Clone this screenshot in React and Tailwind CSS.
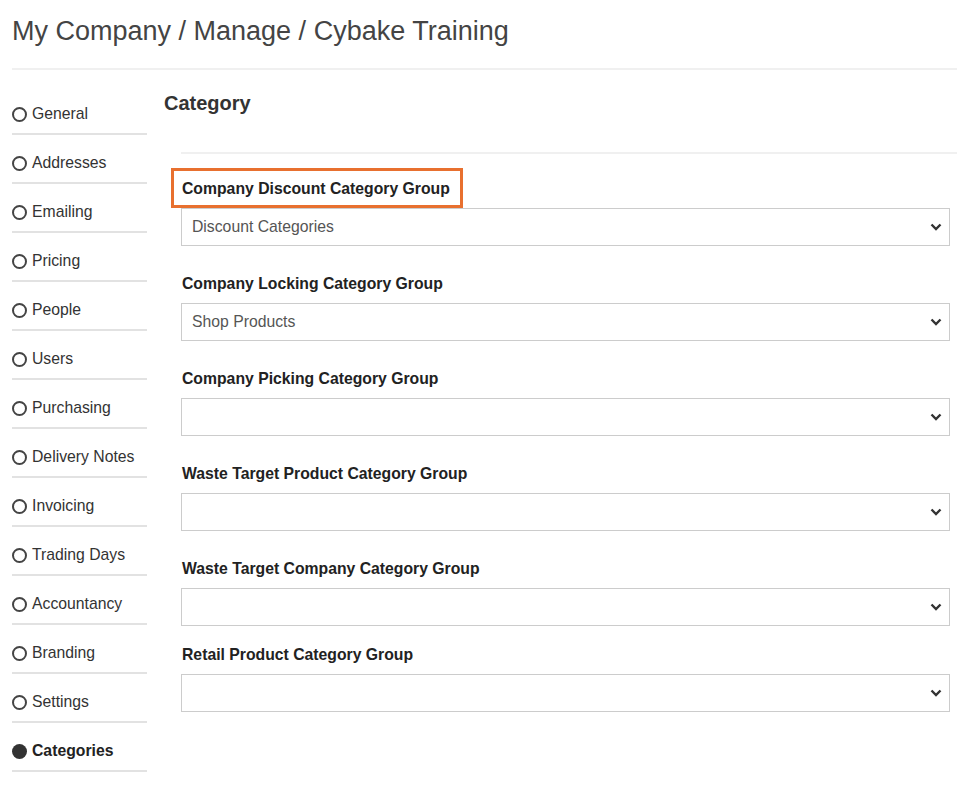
import React from "react";

const navItems = [
    "General",
    "Addresses",
    "Emailing",
    "Pricing",
    "People",
    "Users",
    "Purchasing",
    "Delivery Notes",
    "Invoicing",
    "Trading Days",
    "Accountancy",
    "Branding",
    "Settings",
    "Categories",
];

const fields = [
    { label: "Company Discount Category Group", value: "Discount Categories", highlight: true },
    { label: "Company Locking Category Group", value: "Shop Products" },
    { label: "Company Picking Category Group", value: "" },
    { label: "Waste Target Product Category Group", value: "" },
    { label: "Waste Target Company Category Group", value: "" },
    { label: "Retail Product Category Group", value: "" },
];

function Chevron() {
    return (
        <svg width="12" height="8" viewBox="0 0 12 8" className="shrink-0">
            <polyline points="1.5,1.5 6,6 10.5,1.5" fill="none" stroke="#333" strokeWidth="2.4" />
        </svg>
    );
}

function SelectBox({ value }) {
    return (
        <div className="h-[38px] border border-[#cccccc] bg-white flex items-center justify-between pl-[10px] pr-[7px]">
            <span className="text-[15.75px] text-[#555]">{value}</span>
            <Chevron />
        </div>
    );
}

export default function App() {
    return (
        <div className="bg-white min-h-[793px] pl-[12px] font-['Liberation_Sans',Arial,sans-serif] text-[#333]">
            {/* Breadcrumb title */}
            <h1 className="pt-[16px] text-[27px] leading-[30px] text-[#444]">
                My Company / Manage / Cybake Training
            </h1>
            <div className="mt-[22px] h-[2px] bg-[#f0f0f0]" />

            <div className="flex">
                {/* Sidebar */}
                <div className="w-[135px] shrink-0 mt-[16px]">
                    {navItems.map((item) => {
                        const active = item === "Categories";
                        return (
                            <div key={item} className="pt-[18px] pb-[9px] border-b-2 border-[#e2e2e2]">
                                <div className="flex items-center gap-[5px] h-[20px]">
                                    <span
                                        className={
                                            active
                                                ? "w-[15px] h-[15px] rounded-full bg-[#333] shrink-0"
                                                : "w-[15px] h-[15px] rounded-full border-2 border-[#444] shrink-0"
                                        }
                                    />
                                    <span className={active ? "text-[15.75px] font-bold text-[#222]" : "text-[15.75px] text-[#333]"}>
                                        {item}
                                    </span>
                                </div>
                            </div>
                        );
                    })}
                </div>

                {/* Content */}
                <div className="flex-1 pl-[17px]">
                    <h2 className="mt-[21px] text-[20px] leading-[24px] font-bold text-[#333]">Category</h2>
                    <div className="ml-[17px]">
                        <div className="mt-[37px] h-[2px] bg-[#f0f0f0]" />
                        <div className="pt-[26px] pr-[7px]">
                            {fields.map((f, i) => (
                                <div key={f.label} className={i === 0 ? "" : i === fields.length - 1 ? "mt-[20px]" : "mt-[29px]"}>
                                    <div className="flex mb-[10px] pl-[1px]">
                                        <span className="relative block text-[15.75px] leading-[18px] font-bold text-[#222]">
                                            {f.label}
                                            {f.highlight && (
                                                <span className="absolute -left-[11px] -top-[12px] -right-[13px] -bottom-[10px] border-[3px] border-[#e8702f]" />
                                            )}
                                        </span>
                                    </div>
                                    <SelectBox value={f.value} />
                                </div>
                            ))}
                        </div>
                    </div>
                </div>
            </div>
        </div>
    );
}
